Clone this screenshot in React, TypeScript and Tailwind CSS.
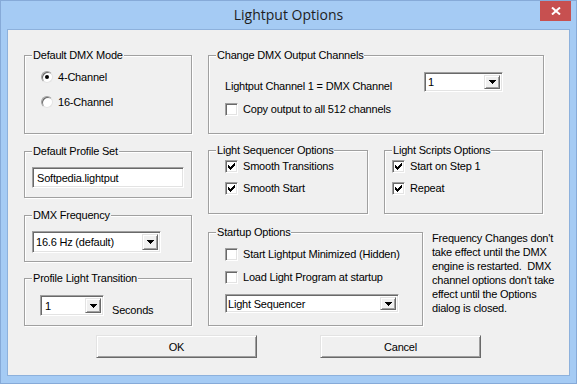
import React from "react";

const sunken =
  "border border-t-[#a0a0a0] border-l-[#a0a0a0] border-b-white border-r-white shadow-[inset_1px_1px_0_#696969,inset_-1px_-1px_0_#e3e3e3]";
const raised =
  "border border-t-[#e3e3e3] border-l-[#e3e3e3] border-b-[#696969] border-r-[#696969] shadow-[inset_1px_1px_0_#ffffff,inset_-1px_-1px_0_#a0a0a0]";

function Arrow() {
  return (
    <svg width="7" height="4" viewBox="0 0 7 4" shapeRendering="crispEdges">
      <path d="M0 0h7v1H0zM1 1h5v1H1zM2 2h3v1H2zM3 3h1v1H3z" fill="#000" />
    </svg>
  );
}

function Combo({
  text,
  className,
  textClass,
}: {
  text: string;
  className: string;
  textClass: string;
}) {
  return (
    <div className={`flex shrink-0 bg-white p-[2px] ${sunken} ${className}`}>
      <div className={`flex-1 flex items-center leading-[14px] ${textClass}`}>{text}</div>
      <div className={`w-[16px] h-full bg-[#f0f0f0] flex items-center justify-center ${raised}`}>
        <Arrow />
      </div>
    </div>
  );
}

function Box({ checked }: { checked?: boolean }) {
  return (
    <div className={`w-[13px] h-[13px] mt-[1px] shrink-0 bg-white flex items-center justify-center ${sunken}`}>
      {checked && (
        <svg width="7" height="7" viewBox="0 0 7 7" shapeRendering="crispEdges">
          <path
            d="M6 0h1v1H6zM5 1h2v1H5zM0 2h1v1H0zM4 2h3v1H4zM0 3h2v1H0zM3 3h3v1H3zM0 4h5v1H0zM1 5h3v1H1zM2 6h1v1H2z"
            fill="#000"
          />
        </svg>
      )}
    </div>
  );
}

function Check({ label, checked, className = "" }: { label: string; checked?: boolean; className?: string }) {
  return (
    <div className={`flex items-start ${className}`}>
      <Box checked={checked} />
      <span className="ml-[5px] leading-[14px] whitespace-nowrap">{label}</span>
    </div>
  );
}

function Radio({ label, checked }: { label: string; checked?: boolean }) {
  return (
    <div className="flex items-center h-[14px]">
      <div className="w-[12px] h-[12px] rounded-full bg-white border border-t-[#a0a0a0] border-l-[#a0a0a0] border-b-[#e3e3e3] border-r-[#e3e3e3] shadow-[inset_1px_1px_0_#696969] flex items-center justify-center">
        {checked && <div className="w-[4px] h-[4px] rounded-full bg-black" />}
      </div>
      <span className="ml-[5px] leading-[14px]">{label}</span>
    </div>
  );
}

function Group({
  label,
  className,
  children,
}: {
  label: string;
  className: string;
  children?: React.ReactNode;
}) {
  return (
    <div className={`relative shrink-0 border border-[#a0a0a0] shadow-[inset_1px_1px_0_#ffffff,1px_1px_0_#ffffff] ${className}`}>
      <span className="absolute -top-[8px] left-[7px] px-[1px] bg-[#f0f0f0] leading-[14px] whitespace-nowrap">
        {label}
      </span>
      {children}
    </div>
  );
}

function PushButton({ label }: { label: string }) {
  return (
    <div className={`w-[161px] h-[23px] bg-[#f0f0f0] flex items-center justify-center leading-[14px] ${raised}`}>
      {label}
    </div>
  );
}

export default function App() {
  return (
    <div className="w-[577px] h-[384px] bg-[#a5cbf4] border border-[#86aad8] px-[6px] pb-[7px] flex flex-col font-['Liberation_Sans',Arial,sans-serif] text-[11px] tracking-[-0.2px] text-black">
      <div className="relative -mx-[6px] h-[28px] flex justify-center">
        <span className="font-['Open_Sans',sans-serif] text-[14px] leading-[28px] tracking-normal text-[#1e1e1e]">
          Lightput Options
        </span>
        <div className="absolute top-0 right-[5px] w-[31px] h-[20px] bg-[#c75050] flex items-center justify-center">
          <svg width="10" height="8" viewBox="0 0 10 8">
            <path d="M1 0.5L9 7.5M9 0.5L1 7.5" stroke="#ffffff" strokeWidth="2" />
          </svg>
        </div>
      </div>

      <div className="flex-1 border border-[#8db1dc] bg-[#f0f0f0] pt-[25px] pl-[16px] flex flex-col">
        <div className="flex gap-[16px]">
          {/* Left column */}
          <div className="w-[168px] shrink-0 flex flex-col">
            <Group label="Default DMX Mode" className="h-[79px] pt-[14px] pl-[16px] flex flex-col gap-[11px]">
              <Radio label="4-Channel" checked />
              <Radio label="16-Channel" />
            </Group>

            <Group label="Default Profile Set" className="mt-[17px] h-[47px] pt-[15px] pl-[7px]">
              <div className={`w-[152px] h-[21px] bg-white pl-[4px] flex items-center leading-[14px] ${sunken}`}>
                Softpedia.lightput
              </div>
            </Group>

            <Group label="DMX Frequency" className="mt-[17px] h-[47px] pt-[15px] pl-[7px]">
              <Combo text="16.6 Hz (default)" className="w-[129px] h-[22px]" textClass="pl-[1px]" />
            </Group>

            <Group label="Profile Light Transition" className="mt-[16px] h-[48px] pt-[16px] pl-[15px] flex items-start">
              <Combo text="1" className="w-[64px] h-[21px]" textClass="pl-[2px]" />
              <span className="ml-[8px] mt-[8px] leading-[14px]">Seconds</span>
            </Group>
          </div>

          {/* Right column */}
          <div className="w-[336px] shrink-0 flex flex-col">
            <Group label="Change DMX Output Channels" className="h-[79px] pt-[16px] pl-[16px] flex flex-col">
              <div className="flex items-start">
                <span className="w-[199px] shrink-0 mt-[7px] leading-[14px] whitespace-nowrap">
                  Lightput Channel 1 = DMX Channel
                </span>
                <Combo text="1" className="w-[79px] h-[20px]" textClass="pl-[1px]" />
              </div>
              <Check label="Copy output to all 512 channels" className="mt-[9px]" />
            </Group>

            <div className="mt-[16px] flex gap-[16px]">
              <Group label="Light Sequencer Options" className="w-[160px] h-[64px] pt-[8px] pl-[16px] flex flex-col gap-[8px]">
                <Check label="Smooth Transitions" checked />
                <Check label="Smooth Start" checked />
              </Group>
              <Group label="Light Scripts Options" className="w-[159px] h-[64px] pt-[8px] pl-[7px] flex flex-col gap-[8px]">
                <Check label="Start on Step 1" checked />
                <Check label="Repeat" checked />
              </Group>
            </div>

            <div className="mt-[18px] flex items-start">
              <Group label="Startup Options" className="w-[215px] h-[94px] pt-[14px] pl-[16px] flex flex-col">
                <Check label="Start Lightput Minimized (Hidden)" />
                <Check label="Load Light Program at startup" className="mt-[9px]" />
                <Combo text="Light Sequencer" className="mt-[10px] w-[174px] h-[19px]" textClass="pl-0" />
              </Group>
              <p className="ml-[9px] -mt-[1px] shrink-0 leading-[14px] whitespace-pre">
                {"Frequency Changes don't\ntake effect until the DMX\nengine is restarted.  DMX\nchannel options don't take\neffect until the Options\ndialog is closed."}
              </p>
            </div>
          </div>
        </div>

        <div className="mt-[9px] pl-[72px] flex gap-[63px]">
          <PushButton label="OK" />
          <PushButton label="Cancel" />
        </div>
      </div>
    </div>
  );
}
